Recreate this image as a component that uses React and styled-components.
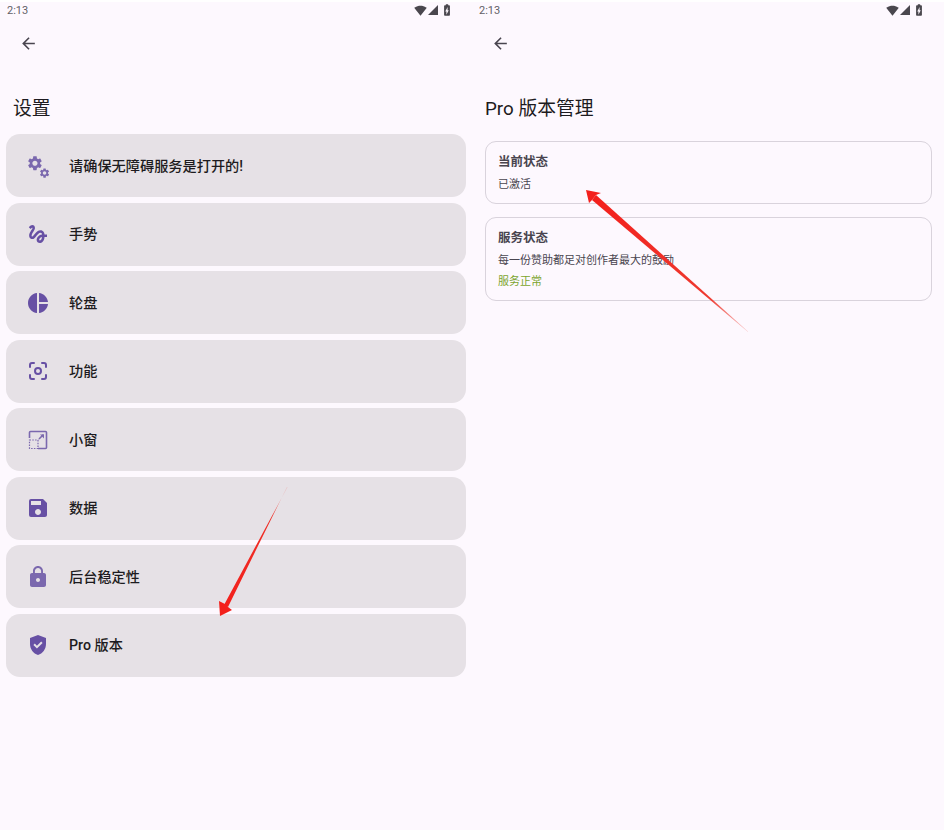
import React from "react";
import styled, { createGlobalStyle } from "styled-components";
import {
  MdArrowBack,
  MdGesture,
  MdPieChart,
  MdSave,
  MdLock,
  MdGppGood,
  MdSignalWifi4Bar,
  MdSignalCellular4Bar,
  MdBatteryChargingFull,
} from "react-icons/md";

const gearPath =
  "M19.14 12.94c.04-.3.06-.61.06-.94 0-.32-.02-.64-.07-.94l2.03-1.58c.18-.14.23-.41.12-.61l-1.92-3.32c-.12-.22-.37-.29-.59-.22l-2.39.96c-.5-.38-1.03-.7-1.62-.94l-.36-2.54c-.04-.24-.24-.41-.48-.41h-3.84c-.24 0-.43.17-.47.41l-.36 2.54c-.59.24-1.13.57-1.62.94l-2.39-.96c-.22-.08-.47 0-.59.22L2.74 8.87c-.12.21-.08.47.12.61l2.03 1.58c-.05.3-.09.63-.09.94s.02.64.07.94l-2.03 1.58c-.18.14-.23.41-.12.61l1.92 3.32c.12.22.37.29.59.22l2.39-.96c.5.38 1.03.7 1.62.94l.36 2.54c.05.24.24.41.48.41h3.84c.24 0 .44-.17.47-.41l.36-2.54c.59-.24 1.13-.56 1.62-.94l2.39.96c.22.08.47 0 .59-.22l1.92-3.32c.12-.22.07-.47-.12-.61l-2.01-1.58zM12 15.6c-1.98 0-3.6-1.62-3.6-3.6s1.62-3.6 3.6-3.6 3.6 1.62 3.6 3.6-1.62 3.6-3.6 3.6z";

const GearsIcon = ({ size }) => (
  <svg viewBox="0 0 24 24" width={size} height={size} fill="currentColor">
    <path d={gearPath} transform="translate(0.3 0.600) scale(0.72)" />
    <path d={gearPath} transform="translate(12.800 13.300) scale(0.48)" />
  </svg>
);

const FocusIcon = ({ size }) => (
  <svg viewBox="0 0 24 24" width={size} height={size} fill="none" stroke="currentColor" strokeWidth="2" strokeLinecap="round">
    <path d="M4 8V6a2 2 0 0 1 2-2h2M16 4h2a2 2 0 0 1 2 2v2M20 16v2a2 2 0 0 1-2 2h-2M8 20H6a2 2 0 0 1-2-2v-2" />
    <circle cx="12" cy="12" r="3" />
  </svg>
);

const WindowIcon = ({ size }) => (
  <svg viewBox="0 0 24 24" width={size} height={size} fill="none" stroke="currentColor">
    <path d="M9 3.500h10.500a1 1 0 0 1 1 1v15a1 1 0 0 1-1 1H12" strokeWidth="1.600" />
    <path d="M3.500 10V4.500a1 1 0 0 1 1-1H9" strokeWidth="1.600" />
    <path d="M3.500 12h8.500v8.500H3.500z" strokeWidth="1.200" strokeDasharray="1.500 1.300" />
    <path d="M13 11l4.500-4.500" strokeWidth="1.600" />
    <path d="M14 6.500h4v4z" fill="currentColor" stroke="none" />
  </svg>
);

const menuItems = [
  { label: "请确保无障碍服务是打开的!", Icon: GearsIcon, color: "#7b68ae", size: 24 },
  { label: "手势", Icon: MdGesture, color: "#6750a4", size: 24 },
  { label: "轮盘", Icon: MdPieChart, color: "#6750a4", size: 24 },
  { label: "功能", Icon: FocusIcon, color: "#6750a4", size: 24 },
  { label: "小窗", Icon: WindowIcon, color: "#7b68ae", size: 24 },
  { label: "数据", Icon: MdSave, color: "#6750a4", size: 24 },
  { label: "后台稳定性", Icon: MdLock, color: "#7b68ae", size: 24 },
  { label: "Pro 版本", Icon: MdGppGood, color: "#6750a4", size: 26 },
];

function StatusRow() {
  return (
    <StatusBar>
      <StatusTime>2:13</StatusTime>
      <StatusIcons>
        <MdSignalWifi4Bar size={13} />
        <MdSignalCellular4Bar size={12} />
        <BatteryIcon size={14} />
      </StatusIcons>
    </StatusBar>
  );
}

function App() {
  return (
    <Page>
      <GlobalStyle />
      <Panel>
        <StatusRow />
        <TopBar>
          <MdArrowBack size={19} />
        </TopBar>
        <Title>设置</Title>
        <Menu>
          {menuItems.map(({ label, Icon, color, size }) => (
            <MenuRow key={label}>
              <IconSlot $color={color}>
                <Icon size={size} />
              </IconSlot>
              <MenuLabel>{label}</MenuLabel>
            </MenuRow>
          ))}
        </Menu>
      </Panel>
      <Panel>
        <StatusRow />
        <TopBar>
          <MdArrowBack size={19} />
        </TopBar>
        <Title>Pro 版本管理</Title>
        <Cards>
          <Card>
            <CardTitle>当前状态</CardTitle>
            <CardText>已激活</CardText>
          </Card>
          <Card>
            <CardTitle>服务状态</CardTitle>
            <CardText>每一份赞助都足对创作者最大的鼓励</CardText>
            <CardText $ok>服务正常</CardText>
          </Card>
        </Cards>
      </Panel>

      <Arrow viewBox="0 0 944 832">
        <defs>
          <linearGradient id="tailA" gradientUnits="userSpaceOnUse" x1="287" y1="487" x2="225" y2="606">
            <stop offset="0" stopColor="#f0453a" stopOpacity="0.25" />
            <stop offset="0.25" stopColor="#ee3028" />
            <stop offset="1" stopColor="#f3201c" />
          </linearGradient>
          <linearGradient id="tailB" gradientUnits="userSpaceOnUse" x1="748" y1="332" x2="594" y2="197">
            <stop offset="0" stopColor="#f0453a" stopOpacity="0.25" />
            <stop offset="0.25" stopColor="#ee3a30" />
            <stop offset="1" stopColor="#f3201c" />
          </linearGradient>
        </defs>
        <polygon fill="url(#tailA)" points="287.500,487 287,487 228,607 224,605" />
        <polygon fill="#f3201c" points="220,616 219,601 225,604 228,607 232,610" />
        <polygon fill="url(#tailB)" points="748,332 748,331.500 596,195 592,200" />
        <polygon fill="#f3201c" points="586,190 601,193 596,195 592,200 589,203" />
      </Arrow>
    </Page>
  );
}

const GlobalStyle = createGlobalStyle`
  html, body {
    margin: 0;
    padding: 0;
    background: #ffffff;
  }
  body {
    font-family: Roboto, "Noto Sans CJK SC", sans-serif;
    color: #1d1b20;
  }
`;

const Page = styled.div`
  position: relative;
  display: flex;
  width: 944px;
  height: 828px;
  margin-top: 2px;
  background: #fdf8fe;
  overflow: hidden;
`;

const Panel = styled.div`
  width: 472px;
  display: flex;
  flex-direction: column;
`;

const StatusBar = styled.div`
  display: flex;
  align-items: center;
  justify-content: space-between;
  height: 16px;
  padding: 0 18px 0 7px;
`;

const StatusTime = styled.span`
  font-size: 11px;
  color: #625f66;
`;

const StatusIcons = styled.div`
  display: flex;
  align-items: center;
  color: #4a474e;
`;

const BatteryIcon = styled(MdBatteryChargingFull)`
  margin-left: 1px;
`;

const TopBar = styled.div`
  display: flex;
  align-items: center;
  height: 19px;
  margin-top: 16px;
  padding-left: 19px;
  color: #49454f;
`;

const Title = styled.h1`
  margin: 41px 0 0;
  padding-left: 13px;
  height: 37px;
  font-size: 18.800px;
  line-height: 30px;
  font-weight: 400;
  color: #1d1b20;
`;

const Menu = styled.div`
  display: flex;
  flex-direction: column;
  gap: 5.500px;
  width: 460px;
  margin-left: 6px;
  margin-top: 3px;
`;

const MenuRow = styled.div`
  display: flex;
  align-items: center;
  height: 63px;
  border-radius: 14px;
  background: #e6e1e6;
`;

const IconSlot = styled.div`
  display: flex;
  align-items: center;
  justify-content: center;
  width: 24px;
  height: 24px;
  margin-left: 20px;
  margin-right: 19px;
  color: ${(p) => p.$color};
`;

const MenuLabel = styled.span`
  padding-bottom: 2px;
  font-size: 14.200px;
  font-weight: 500;
  color: #1d1b20;
`;

const Cards = styled.div`
  display: flex;
  flex-direction: column;
  gap: 13px;
  width: 447px;
  margin-left: 13px;
  margin-top: 10px;
`;

const Card = styled.div`
  display: flex;
  flex-direction: column;
  gap: 5px;
  padding: 11px 12px 10px;
  border: 1px solid #d9d3dc;
  border-radius: 11px;
`;

const CardTitle = styled.div`
  font-size: 12.500px;
  line-height: 17px;
  font-weight: 700;
  color: #49454f;
  margin-bottom: 2px;
`;

const CardText = styled.div`
  font-size: 11px;
  line-height: 16px;
  color: ${(p) => (p.$ok ? "#7ba52f" : "#49454f")};
`;

const Arrow = styled.svg`
  position: absolute;
  top: -2px;
  left: 0;
  width: 944px;
  height: 832px;
  pointer-events: none;
`;

export default App;
